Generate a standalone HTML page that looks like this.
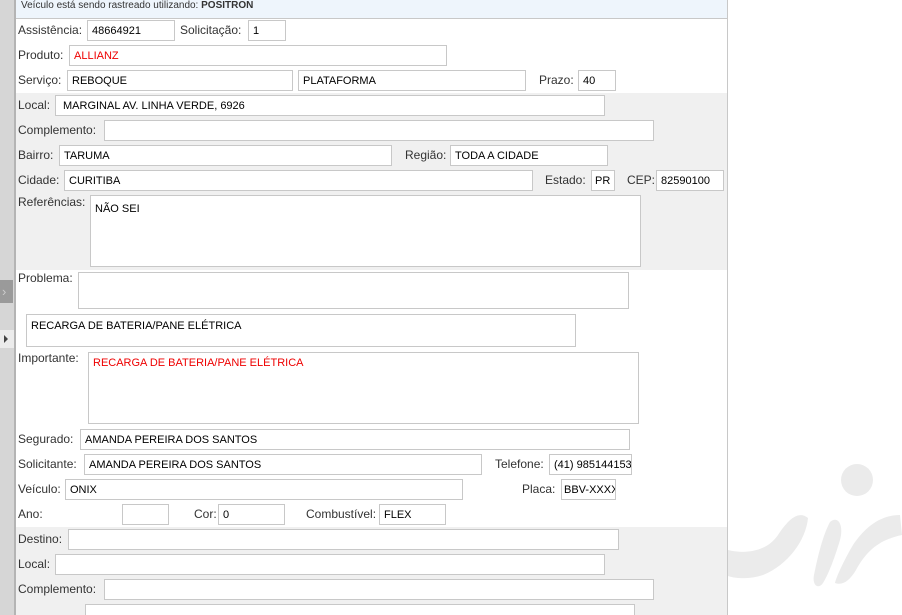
<!DOCTYPE html><html style="overflow:hidden;height:615px"><head><meta charset="utf-8"><style>
body{margin:0;width:902px;height:615px;overflow:hidden;background:#fff;font-family:"Liberation Sans",Arial,sans-serif;position:relative}
.a{position:absolute}
.l{position:absolute;font-size:12px;color:#333;line-height:21px}
.i{position:absolute;box-sizing:border-box;border:1px solid #c8c8c8;background:#fff;font-size:11px;color:#000;line-height:20px;padding-left:4px;white-space:nowrap;overflow:hidden;height:21px}
.t{line-height:14px;padding-top:6px}
.r{color:#e00}
</style></head><body>
<div class="a" style="left:0;top:0;width:14px;height:615px;background:#d6d6d6"></div>
<div class="a" style="left:14px;top:0;width:2px;height:615px;background:#b4b4b4"></div>
<div class="a" style="left:0;top:280px;width:13px;height:23px;background:#9a9a9a"></div>
<div class="a" style="left:2px;top:284px;color:#ccc;font-size:13px">›</div>
<div class="a" style="left:0;top:330px;width:14px;height:18px;background:#ececec"></div>
<div class="a" style="left:4px;top:335px;width:0;height:0;border-left:4px solid #444;border-top:4px solid transparent;border-bottom:4px solid transparent"></div>
<div class="a" style="left:727px;top:0;width:1px;height:615px;background:#c8c8c8"></div>
<div class="a" style="left:16px;top:0;width:711px;height:18px;background:#eef5fc;border-bottom:1px solid #c8c8c8;font-size:10px;line-height:11px;color:#333"><span style="margin-left:5px">Veículo está sendo rastreado utilizando: <b>POSITRON</b></span></div>
<div class="a" style="left:16px;top:93px;width:711px;height:177px;background:#f0f0f0"></div>
<div class="a" style="left:16px;top:527px;width:711px;height:88px;background:#f0f0f0"></div>
<svg class="a" style="left:728px;top:440px" width="174" height="175"><g fill="#ebebeb"><circle cx="129" cy="40" r="16"/><path d="M0 110 C20 115 40 110 50 95 C60 80 70 70 80 78 C78 100 60 125 35 135 C20 140 5 138 0 136Z"/><path d="M102 82 C110 75 116 85 112 100 C106 120 100 135 95 143 C90 150 84 145 86 135 C90 115 95 95 102 82Z"/><path d="M172 75 C150 75 135 90 125 105 C115 122 108 138 107 143 C115 146 122 140 128 130 C138 112 150 100 174 95Z"/></g></svg>

<div class="l" style="left:18px;top:20px">Assistência:</div><div class="i" style="left:87px;top:20px;width:88px">48664921</div>
<div class="l" style="left:180px;top:20px">Solicitação:</div><div class="i" style="left:248px;top:20px;width:38px">1</div>
<div class="l" style="left:18px;top:45px">Produto:</div><div class="i r" style="left:69px;top:45px;width:378px">ALLIANZ</div>
<div class="l" style="left:18px;top:70px">Serviço:</div><div class="i" style="left:67px;top:70px;width:226px">REBOQUE</div><div class="i" style="left:298px;top:70px;width:228px">PLATAFORMA</div>
<div class="l" style="left:539px;top:70px">Prazo:</div><div class="i" style="left:578px;top:70px;width:38px">40</div>
<div class="l" style="left:18px;top:95px">Local:</div><div class="i" style="left:55px;top:95px;width:550px;padding-left:7px">MARGINAL AV. LINHA VERDE, 6926</div>
<div class="l" style="left:18px;top:120px">Complemento:</div><div class="i" style="left:104px;top:120px;width:550px"></div>
<div class="l" style="left:18px;top:145px">Bairro:</div><div class="i" style="left:59px;top:145px;width:333px">TARUMA</div>
<div class="l" style="left:405px;top:145px">Região:</div><div class="i" style="left:450px;top:145px;width:158px">TODA A CIDADE</div>
<div class="l" style="left:18px;top:170px">Cidade:</div><div class="i" style="left:64px;top:170px;width:469px">CURITIBA</div>
<div class="l" style="left:545px;top:170px">Estado:</div><div class="i" style="left:591px;top:170px;width:24px;padding-left:3px">PR</div>
<div class="l" style="left:627px;top:170px">CEP:</div><div class="i" style="left:656px;top:170px;width:68px">82590100</div>
<div class="l" style="left:18px;top:192px">Referências:</div><div class="i t" style="left:90px;top:195px;width:551px;height:72px">NÃO SEI</div>
<div class="l" style="left:18px;top:268px">Problema:</div><div class="i" style="left:78px;top:272px;width:551px;height:37px"></div>
<div class="i t" style="left:26px;top:314px;width:550px;height:33px;padding-top:4px">RECARGA DE BATERIA/PANE ELÉTRICA</div>
<div class="l" style="left:18px;top:348px">Importante:</div><div class="i t r" style="left:88px;top:352px;width:551px;height:72px;padding-top:3px">RECARGA DE BATERIA/PANE ELÉTRICA</div>
<div class="l" style="left:18px;top:429px">Segurado:</div><div class="i" style="left:80px;top:429px;width:550px">AMANDA PEREIRA DOS SANTOS</div>
<div class="l" style="left:18px;top:454px">Solicitante:</div><div class="i" style="left:84px;top:454px;width:398px">AMANDA PEREIRA DOS SANTOS</div>
<div class="l" style="left:495px;top:454px">Telefone:</div><div class="i" style="left:549px;top:454px;width:83px">(41) 985144153</div>
<div class="l" style="left:18px;top:479px">Veículo:</div><div class="i" style="left:65px;top:479px;width:398px">ONIX</div>
<div class="l" style="left:522px;top:479px">Placa:</div><div class="i" style="left:561px;top:479px;width:55px;padding-left:2px">BBV-XXXX</div>
<div class="l" style="left:18px;top:504px">Ano:</div><div class="i" style="left:122px;top:504px;width:47px"></div>
<div class="l" style="left:194px;top:504px">Cor:</div><div class="i" style="left:218px;top:504px;width:67px">0</div>
<div class="l" style="left:306px;top:504px">Combustível:</div><div class="i" style="left:379px;top:504px;width:67px">FLEX</div>
<div class="l" style="left:18px;top:529px">Destino:</div><div class="i" style="left:68px;top:529px;width:551px"></div>
<div class="l" style="left:18px;top:554px">Local:</div><div class="i" style="left:55px;top:554px;width:550px"></div>
<div class="l" style="left:18px;top:579px">Complemento:</div><div class="i" style="left:104px;top:579px;width:550px"></div>
<div class="i" style="left:85px;top:604px;width:550px;height:11px;border-bottom:none"></div>
</body></html>
